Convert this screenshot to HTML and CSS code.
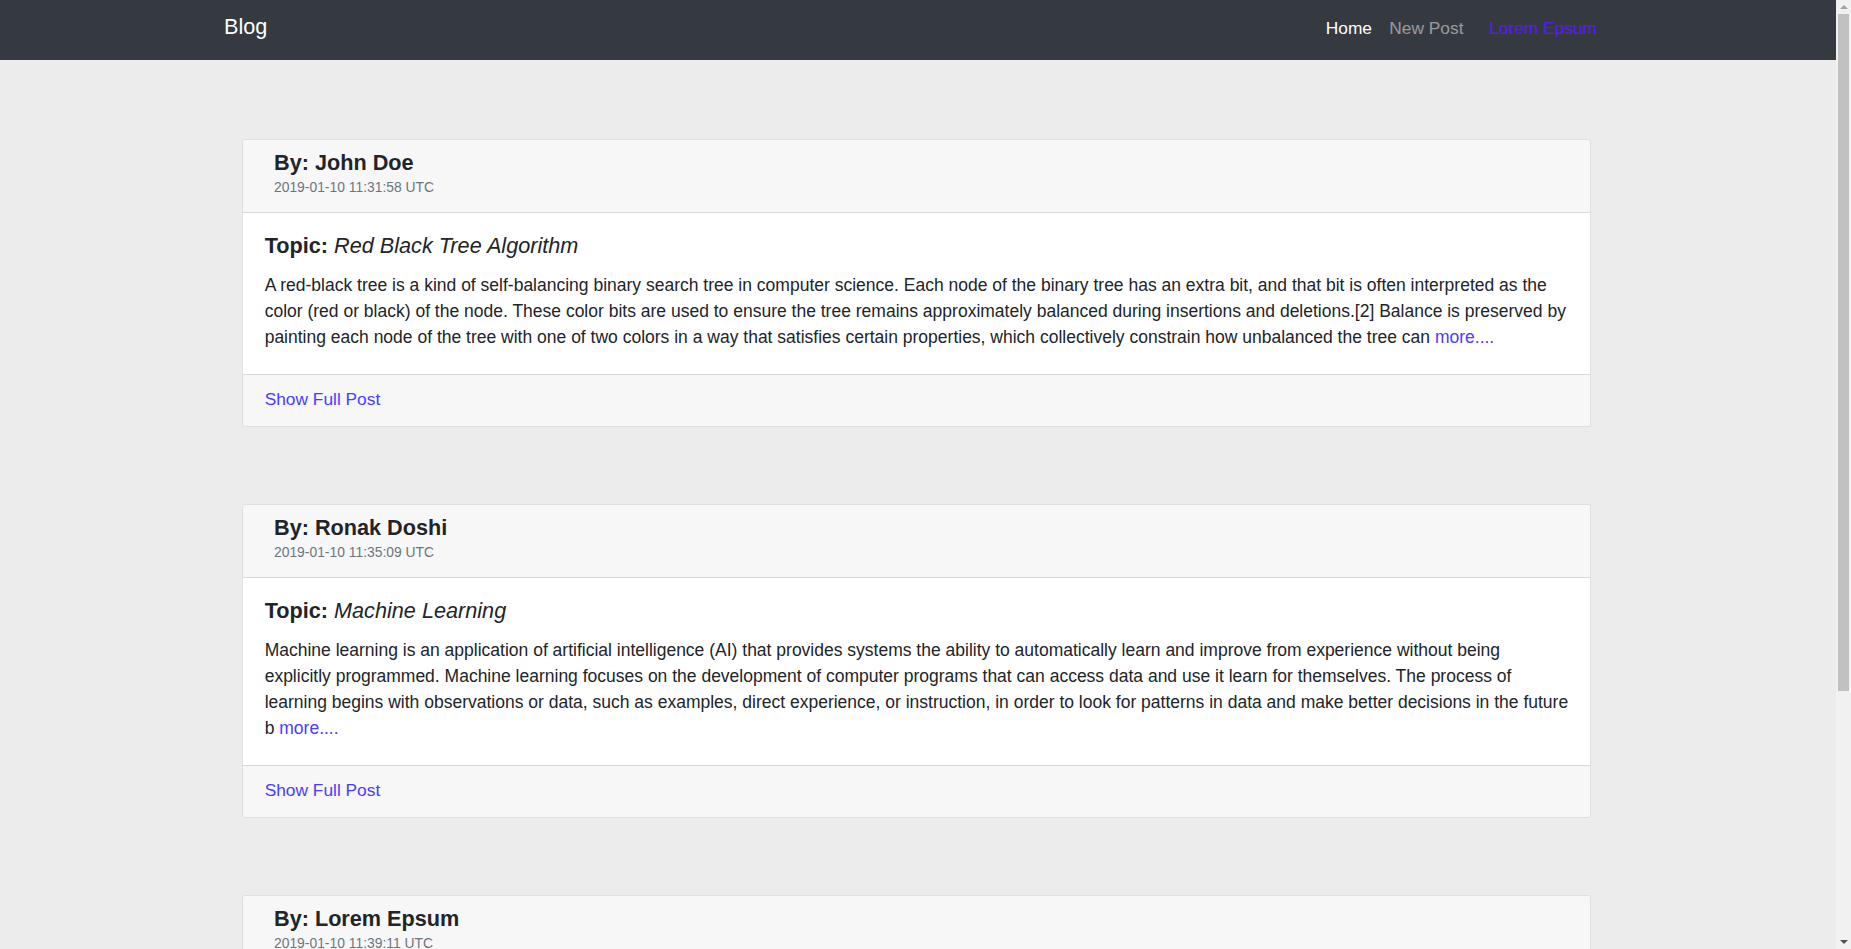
FILE: index.html
```html
<!DOCTYPE html>
<html lang="en">
<head>
<meta charset="utf-8">
<title>Blog</title>
<link rel="stylesheet" href="styles.css">
</head>
<body>
<nav class="navbar">
  <a class="brand" href="#">Blog</a>
  <div class="nav-links">
    <a class="nav-link active" href="#">Home</a>
    <a class="nav-link muted" href="#">New Post</a>
    <a class="nav-user" href="#">Lorem Epsum</a>
  </div>
</nav>
<main class="posts">
  <article class="card">
    <header class="card-header">
      <h5 class="author">By: John Doe</h5>
      <div class="date">2019-01-10 11:31:58 UTC</div>
    </header>
    <div class="card-body">
      <h5 class="topic">Topic: <em>Red Black Tree Algorithm</em></h5>
      <p class="text">A red-black tree is a kind of self-balancing binary search tree in computer science. Each node of the binary tree has an extra bit, and that bit is often interpreted as the color (red or black) of the node. These color bits are used to ensure the tree remains approximately balanced during insertions and deletions.[2] Balance is preserved by painting each node of the tree with one of two colors in a way that satisfies certain properties, which collectively constrain how unbalanced the tree can <a class="link" href="#">more....</a></p>
    </div>
    <footer class="card-footer"><a class="link" href="#">Show Full Post</a></footer>
  </article>
  <article class="card">
    <header class="card-header">
      <h5 class="author">By: Ronak Doshi</h5>
      <div class="date">2019-01-10 11:35:09 UTC</div>
    </header>
    <div class="card-body">
      <h5 class="topic">Topic: <em>Machine Learning</em></h5>
      <p class="text">Machine learning is an application of artificial intelligence (AI) that provides systems the ability to automatically learn and improve from experience without being explicitly programmed. Machine learning focuses on the development of computer programs that can access data and use it learn for themselves. The process of learning begins with observations or data, such as examples, direct experience, or instruction, in order to look for patterns in data and make better decisions in the future b <a class="link" href="#">more....</a></p>
    </div>
    <footer class="card-footer"><a class="link" href="#">Show Full Post</a></footer>
  </article>
  <article class="card">
    <header class="card-header">
      <h5 class="author">By: Lorem Epsum</h5>
      <div class="date">2019-01-10 11:39:11 UTC</div>
    </header>
    <div class="card-body">
      <h5 class="topic">Topic: <em>Lorem Ipsum</em></h5>
      <p class="text">Lorem ipsum dolor sit amet, consectetur adipiscing elit, sed do eiusmod tempor incididunt ut labore et dolore magna aliqua. Ut enim ad minim veniam, quis nostrud exercitation ullamco laboris nisi ut aliquip ex ea commodo consequat. Duis aute irure dolor in reprehenderit in voluptate velit esse cillum dolore eu fugiat nulla pariatur. Excepteur sint occaecat cupidatat non proident, sunt in culpa qui officia deserunt mollit anim id est laborum. Sed ut perspiciatis unde omnis iste natus error sit voluptatem accusantium doloremque laudantium, totam rem aperiam <a class="link" href="#">more....</a></p>
    </div>
    <footer class="card-footer"><a class="link" href="#">Show Full Post</a></footer>
  </article>
</main>
<div class="scrollbar" aria-hidden="true">
  <div class="sb-button"><span class="sb-up"></span></div>
  <div class="sb-thumb"></div>
  <div class="sb-spacer"></div>
  <div class="sb-button"><span class="sb-down"></span></div>
</div>
</body>
</html>
```

FILE: styles.css
```css
html {
  font-size: 17.3333px;
}

* {
  box-sizing: border-box;
}

body {
  margin: 0;
  padding-right: 15px;
  background: #ececec;
  color: #212529;
  font-family: "Liberation Sans", Arial, sans-serif;
  font-size: 1rem;
  line-height: 1.5;
}

a {
  text-decoration: none;
}

.navbar {
  height: 60px;
  background: #343a40;
  display: flex;
  align-items: center;
  justify-content: space-between;
  padding: 0 239px 5px 224px;
}

.brand {
  color: #fff;
  font-size: 1.25rem;
  line-height: 1.5;
}

.nav-links {
  display: flex;
  align-items: center;
}

.nav-link {
  padding: 0 0.5rem;
  line-height: 26px;
}

.nav-link.active {
  color: #fff;
  padding-left: 0;
}

.nav-link.muted {
  color: rgba(255, 255, 255, 0.5);
}

.nav-user {
  color: #5a17ff;
  margin-left: 17px;
  line-height: 26px;
}

.posts {
  width: 1349px;
  margin: 0 0 0 242px;
  padding: 79px 0 78px;
  display: flex;
  flex-direction: column;
  gap: 77px;
}

.card {
  background: #fff;
  border: 1px solid rgba(0, 0, 0, 0.125);
  border-radius: 4px;
  overflow: hidden;
}

.card-header {
  background: #f7f7f7;
  border-bottom: 1px solid rgba(0, 0, 0, 0.125);
  padding: 10px 1.25rem 14px 31px;
}

.author {
  margin: 0 0 1px;
  font-size: 1.25rem;
  line-height: 1.2;
  font-weight: 700;
}

.date {
  font-size: 0.8rem;
  line-height: 1.5;
  color: #6c757d;
}

.card-body {
  padding: 20px 1.25rem 24px;
}

.topic {
  margin: 0 0 13px;
  font-size: 1.25rem;
  line-height: 1.2;
  font-weight: 700;
}

.topic em {
  font-weight: 400;
}

.text {
  margin: 0;
  font-size: 17.5px;
  line-height: 26px;
}

.link {
  color: #4b3cff;
}

.card-footer {
  background: #f7f7f7;
  border-top: 1px solid rgba(0, 0, 0, 0.125);
  padding: 11px 1.25rem 14px;
  line-height: 26px;
}

.scrollbar {
  position: fixed;
  top: 0;
  right: 0;
  width: 15px;
  height: 100vh;
  background: #f1f1f1;
  display: flex;
  flex-direction: column;
}

.sb-button {
  height: 14px;
  display: flex;
  align-items: center;
  justify-content: center;
}

.sb-up {
  width: 0;
  height: 0;
  border-left: 4px solid transparent;
  border-right: 4px solid transparent;
  border-bottom: 4px solid #a3a3a3;
}

.sb-down {
  width: 0;
  height: 0;
  border-left: 4px solid transparent;
  border-right: 4px solid transparent;
  border-top: 4px solid #505050;
}

.sb-thumb {
  height: 677px;
  margin: 0 2px;
  background: #c1c1c1;
}

.sb-spacer {
  flex: 1;
}
```
